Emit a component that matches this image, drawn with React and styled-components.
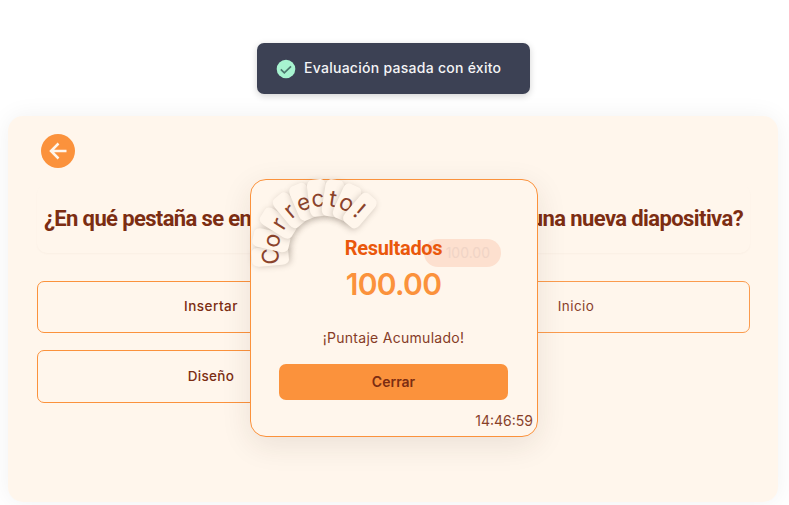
import React from "react";
import styled, { createGlobalStyle } from "styled-components";

const GlobalStyle = createGlobalStyle`
  * { box-sizing: border-box; }
  body {
    margin: 0;
    background: #fff;
    font-family: Inter, "Liberation Sans", sans-serif;
    color: #7c2d12;
    overflow: hidden;
  }
  button { font: inherit; color: inherit; padding: 0; cursor: pointer; }
`;

const Page = styled.main`
  position: relative;
  height: 505px;
  padding: 116px 11px 3px 8px;
  overflow: hidden;
`;

const Card = styled.section`
  height: 386px;
  padding: 18px 28px 0 29px;
  border-radius: 15px;
  background: #fff6ec;
  box-shadow: 0 0 24px rgba(0, 0, 0, 0.06);
`;

const BackButton = styled.button`
  display: flex;
  align-items: center;
  justify-content: center;
  width: 34px;
  height: 34px;
  margin-left: 4px;
  border: 0;
  border-radius: 50%;
  background: #fb923c;
`;

const Question = styled.h1`
  display: flex;
  align-items: center;
  justify-content: space-between;
  height: 69px;
  margin: 16px 0 28px;
  padding: 0 7px;
  border-radius: 10px;
  box-shadow: 0 1px 2px rgba(124, 45, 18, 0.035);
  font-family: Roboto, sans-serif;
  font-size: 22px;
  font-weight: 700;
  white-space: nowrap;
`;

const QuestionPart = styled.span`
  letter-spacing: ${(p) => p.$spacing};
`;

const Answers = styled.div`
  display: grid;
  grid-template-columns: 1fr 1fr;
  grid-template-rows: 52px 53px;
  gap: 17px;
`;

const Answer = styled.button`
  padding-bottom: 2px;
  border: 1px solid #fb923c;
  border-radius: 7px;
  background: transparent;
  font-size: 13.5px;
  font-weight: ${(p) => (p.$light ? 400 : 500)};
  letter-spacing: ${(p) => p.$spacing};
  opacity: ${(p) => (p.$light ? 0.9 : 1)};
`;

const Toast = styled.div`
  position: absolute;
  top: 43px;
  left: 257px;
  display: flex;
  align-items: center;
  gap: 8px;
  width: 273px;
  height: 51px;
  padding-left: 19px;
  border-radius: 7px;
  background: #3c4154;
  color: #f4f4f6;
  box-shadow: 0 2px 7px rgba(0, 0, 0, 0.18);
  font-size: 14px;
  font-weight: 500;
  line-height: 16px;
  letter-spacing: 0.27px;
  white-space: nowrap;
`;

const ToastText = styled.span`
  padding-bottom: 1px;
`;

const Modal = styled.div`
  position: absolute;
  top: 179px;
  left: 250px;
  display: flex;
  flex-direction: column;
  align-items: center;
  width: 288px;
  height: 258px;
  padding: 54px 4px 0 3px;
  border: 1px solid #fb923c;
  border-radius: 16px;
  background: #fff6ec;
  box-shadow: 0 8px 30px rgba(60, 40, 25, 0.1);
`;

const ResultTitle = styled.h2`
  position: relative;
  z-index: 1;
  margin: 0;
  height: 29px;
  font: 700 20px/28px Roboto, sans-serif;
  letter-spacing: -0.3px;
  color: #ea580c;
`;

const Score = styled.strong`
  height: 42px;
  font-size: 30px;
  font-weight: 600;
  line-height: 43px;
  letter-spacing: -0.7px;
  color: #fb923c;
`;

const Caption = styled.p`
  margin: 21px 0 15px;
  font-size: 14px;
  line-height: 23px;
  letter-spacing: 0.28px;
  opacity: 0.92;
`;

const CloseButton = styled.button`
  width: 229px;
  height: 36px;
  padding-bottom: 2px;
  border: 0;
  border-radius: 7px;
  background: #fb923c;
  font-size: 14px;
  font-weight: 600;
`;

const Clock = styled.time`
  align-self: flex-end;
  margin-top: 10px;
  font-size: 14px;
  line-height: 21px;
  opacity: 0.9;
`;

const ScoreBadge = styled.span`
  position: absolute;
  top: 59px;
  left: 173px;
  width: 77px;
  height: 28px;
  padding-right: 11px;
  border-radius: 14px;
  background: #fde0cf;
  color: #f0d4c6;
  font-size: 14px;
  line-height: 27px;
  text-align: right;
`;

const Arc = styled.div`
  position: absolute;
  top: 71.5px;
  left: 73.5px;
  width: 0;
  height: 0;
`;

const ArcTile = styled.span`
  position: absolute;
  left: -9.5px;
  top: -73px;
  width: 19px;
  height: 37px;
  border-radius: 5px / 7px;
  background: #fff6ec;
  box-shadow: 0 2px 6px rgba(80, 65, 50, 0.28);
  transform-origin: 9.5px 73px;
  transform: rotate(${(p) => p.$angle}deg);
  font-size: 23px;
  line-height: 38px;
  text-align: center;
  color: #8b432c;
`;

const letters = [
  ["C", -94.5], ["o", -77.5], ["r", -58], ["r", -40], ["e", -23],
  ["c", -7], ["t", 9], ["o", 24.5], ["!", 40.5],
];

const answers = [
  { label: "Insertar", spacing: "0.5px" },
  { label: "Inicio", spacing: "0.4px", light: true },
  { label: "Diseño", spacing: "0.3px" },
];

function ArrowIcon() {
  return (
    <svg width="20" height="20" viewBox="0 0 20 20" fill="none" stroke="#fff6ec" strokeWidth="2.5">
      <path d="M18.5 10H3M10.5 2.5 3 10l7.5 7.5" />
    </svg>
  );
}

function CheckIcon() {
  return (
    <svg width="20" height="20" viewBox="0 0 20 20" fill="none">
      <circle cx="10" cy="10" r="9.3" fill="#a7f3d0" />
      <path d="m4.8 10.4 3.5 3.4 6.7-6.5" stroke="#4c796f" strokeWidth="1.7" />
    </svg>
  );
}

export default function App() {
  return (
    <Page>
      <GlobalStyle />
      <Card>
        <BackButton aria-label="Volver"><ArrowIcon /></BackButton>
        <Question>
          <QuestionPart $spacing="-0.63px">¿En qué pestaña se en</QuestionPart>
          <QuestionPart $spacing="-0.6px">una nueva diapositiva?</QuestionPart>
        </Question>
        <Answers>
          {answers.map((a) => (
            <Answer key={a.label} $spacing={a.spacing} $light={a.light}>{a.label}</Answer>
          ))}
        </Answers>
      </Card>
      <Toast><CheckIcon /><ToastText>Evaluación pasada con éxito</ToastText></Toast>
      <Modal>
        <Arc>
          {letters.map(([char, angle]) => (
            <ArcTile key={angle} $angle={angle}>{char}</ArcTile>
          ))}
        </Arc>
        <ScoreBadge>100.00</ScoreBadge>
        <ResultTitle>Resultados</ResultTitle>
        <Score>100.00</Score>
        <Caption>¡Puntaje Acumulado!</Caption>
        <CloseButton>Cerrar</CloseButton>
        <Clock>14:46:59</Clock>
      </Modal>
    </Page>
  );
}
